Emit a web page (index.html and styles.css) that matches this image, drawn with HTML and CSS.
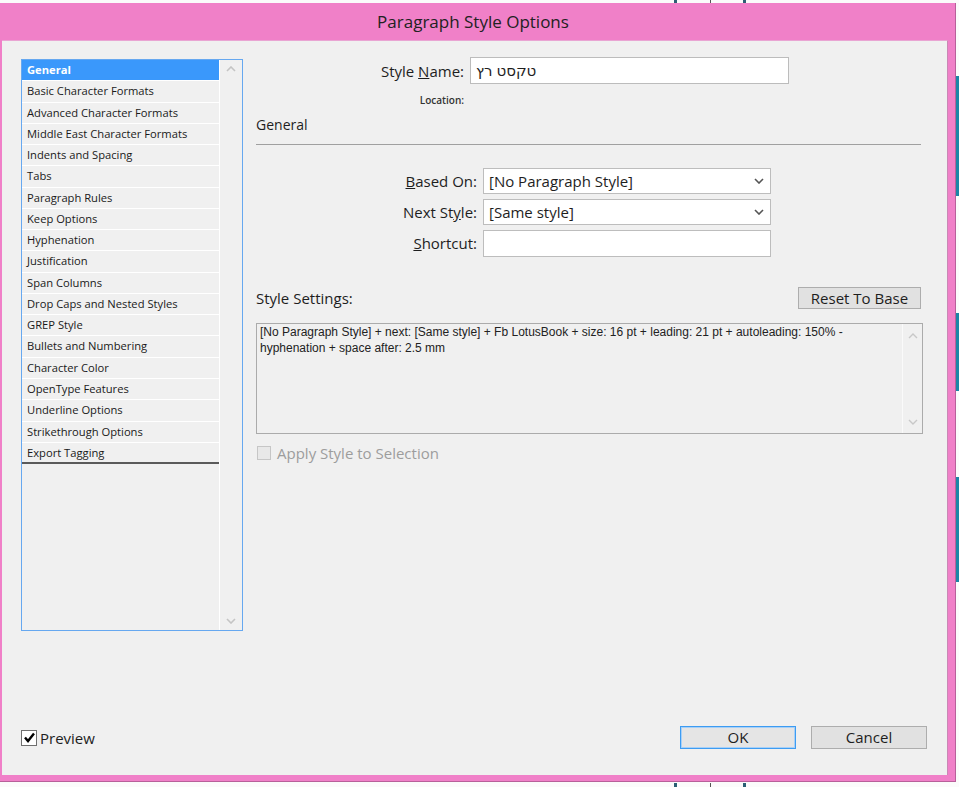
FILE: index.html
```html
<!DOCTYPE html>
<html>
<head>
<meta charset="utf-8">
<link rel="stylesheet" href="styles.css">
</head>
<body>
<div class="screen">
  <div class="bg-mark m1"></div>
  <div class="bg-mark m2"></div>
  <div class="bg-mark m3"></div>
  <div class="bg-mark m4"></div>
  <div class="bg-mark m5"></div>
  <div class="bg-mark m6"></div>
  <div class="teal t1"></div>
  <div class="teal t2"></div>
  <div class="teal t3"></div>

  <div class="dialog">
    <div class="titlebar">Paragraph Style Options</div>
    <div class="client">
      <div class="main">
        <div class="listbox">
          <ul class="list">
            <li class="sel">General</li>
            <li>Basic Character Formats</li>
            <li>Advanced Character Formats</li>
            <li>Middle East Character Formats</li>
            <li>Indents and Spacing</li>
            <li>Tabs</li>
            <li>Paragraph Rules</li>
            <li>Keep Options</li>
            <li>Hyphenation</li>
            <li>Justification</li>
            <li>Span Columns</li>
            <li>Drop Caps and Nested Styles</li>
            <li>GREP Style</li>
            <li>Bullets and Numbering</li>
            <li>Character Color</li>
            <li>OpenType Features</li>
            <li>Underline Options</li>
            <li>Strikethrough Options</li>
            <li class="last">Export Tagging</li>
          </ul>
          <div class="vscroll">
            <svg class="chev" width="10" height="6" viewBox="0 0 10 6"><polyline points="1,5 5,1 9,5" fill="none" stroke="#c4c4c4" stroke-width="1.6"/></svg>
            <svg class="chev" width="10" height="6" viewBox="0 0 10 6"><polyline points="1,1 5,5 9,1" fill="none" stroke="#c4c4c4" stroke-width="1.6"/></svg>
          </div>
        </div>

        <div class="panel">
          <div class="name-row">
            <span class="lbl name-lbl">Style <u>N</u>ame:</span>
            <div class="textbox name-box">טקסט רץ</div>
          </div>
          <div class="location"><span>Location:</span></div>
          <div class="heading">General</div>
          <div class="rule"></div>

          <div class="field-row first">
            <span class="lbl field-lbl"><u>B</u>ased On:</span>
            <div class="select">
              <span>[No Paragraph Style]</span>
              <svg width="10" height="6" viewBox="0 0 10 6"><polyline points="1,1 5,5 9,1" fill="none" stroke="#555" stroke-width="1.6"/></svg>
            </div>
          </div>
          <div class="field-row">
            <span class="lbl field-lbl">Next St<u>y</u>le:</span>
            <div class="select">
              <span>[Same style]</span>
              <svg width="10" height="6" viewBox="0 0 10 6"><polyline points="1,1 5,5 9,1" fill="none" stroke="#555" stroke-width="1.6"/></svg>
            </div>
          </div>
          <div class="field-row">
            <span class="lbl field-lbl"><u>S</u>hortcut:</span>
            <div class="select plain"></div>
          </div>

          <div class="settings-row">
            <span class="lbl">Style Settings:</span>
            <button class="btn reset">Reset To Base</button>
          </div>
          <div class="settings-box">
            <div class="settings-text">[No Paragraph Style] + next: [Same style] + Fb LotusBook + size: 16 pt + leading: 21 pt + autoleading: 150% - hyphenation + space after: 2.5 mm</div>
            <div class="settings-scroll">
              <svg width="10" height="6" viewBox="0 0 10 6"><polyline points="1,5 5,1 9,5" fill="none" stroke="#c8c8c8" stroke-width="1.4"/></svg>
              <svg width="10" height="6" viewBox="0 0 10 6"><polyline points="1,1 5,5 9,1" fill="none" stroke="#c8c8c8" stroke-width="1.4"/></svg>
            </div>
          </div>
          <div class="apply-row">
            <span class="cbox disabled"></span>
            <span class="apply-lbl">Apply Style to Selection</span>
          </div>
        </div>
      </div>

      <div class="footer">
        <div class="preview">
          <span class="cbox checked">
            <svg width="13" height="13" viewBox="0 0 13 13"><polyline points="2,6.5 5,10 11,2.5" fill="none" stroke="#000" stroke-width="2.4"/></svg>
          </span>
          <span class="preview-lbl">Preview</span>
        </div>
        <div class="buttons">
          <button class="btn ok">OK</button>
          <button class="btn cancel">Cancel</button>
        </div>
      </div>
    </div>
  </div>
</div>
</body>
</html>
```

FILE: styles.css
```css
* { box-sizing: border-box; }
html, body { margin: 0; padding: 0; background: #ffffff; }
.screen {
  position: relative;
  width: 959px;
  height: 787px;
  overflow: hidden;
  background: #fbfbfb;
  font-family: "Open Sans", "Noto Sans", sans-serif;
  color: #1e1e1e;
}
.bg-mark { position: absolute; width: 3px; height: 4px; background: #2b5f74; }
.m1 { left: 674px; top: 0; }
.m2 { left: 710px; top: 0; width: 1px; background: #555; }
.m3 { left: 743px; top: 0; }
.m4 { left: 674px; top: 783px; }
.m5 { left: 710px; top: 783px; width: 1px; background: #555; }
.m6 { left: 743px; top: 783px; }
.teal { position: absolute; left: 956px; width: 3px; background: #1b86a6; }
.t1 { top: 76px; height: 120px; }
.t2 { top: 313px; height: 78px; }
.t3 { top: 477px; height: 105px; }

.dialog {
  position: relative;
  margin-top: 3px;
  width: 956px;
  height: 779px;
  background: #f080c8;
  border-right: 1px solid #b8609a;
  border-bottom: 1px solid #b8609a;
  padding: 0 7px 6px 2px;
  display: flex;
  flex-direction: column;
}
.titlebar {
  height: 37px;
  line-height: 38px;
  text-align: center;
  font-size: 17px;
  color: #222;
  padding-right: 4px;
}
.client {
  flex: 1;
  background: #f0f0f0;
  border-right: 1px solid #c988b5;
  border-top: 1px solid #e9a5d3;
  padding: 18px 20px 26px 19px;
  display: flex;
  flex-direction: column;
}
.main { display: flex; align-items: flex-start; gap: 13px; }

/* left list */
.listbox {
  width: 222px;
  height: 572px;
  border: 1px solid #66a8f0;
  display: flex;
  background: #f0f0f0;
}
.list {
  list-style: none;
  margin: 0;
  padding: 0;
  width: 198px;
  border-right: 1px solid #ffffff;
  font-size: 11.2px;
}
.list li {
  height: 21.28px;
  line-height: 20px;
  padding-left: 5px;
  border-bottom: 1px solid #ffffff;
  color: #1a1a1a;
  white-space: nowrap;
}
.list li.sel { background: #3a98fb; color: #ffffff; font-weight: 700; }
.list li.last { border-bottom: 2px solid #5a5a5a; }
.vscroll {
  flex: 1;
  display: flex;
  flex-direction: column;
  justify-content: space-between;
  align-items: center;
  padding: 6px 0 6px 0;
}

/* right panel */
.panel { width: 667px; margin-top: -2px; }
.lbl { font-size: 15px; color: #1e1e1e; white-space: nowrap; }
.name-row { display: flex; align-items: center; height: 27px; }
.name-lbl { width: 208px; text-align: right; }
.textbox {
  margin-left: 6px;
  width: 319px;
  height: 27px;
  background: #fff;
  border: 1px solid #bcbcbc;
  font-size: 15px;
  line-height: 24px;
  padding-left: 5px;
  font-family: "Noto Sans", "DejaVu Sans", sans-serif;
}
.location {
  margin-top: 8px;
  width: 208px;
  text-align: right;
  font-size: 10px;
  line-height: 16px;
  font-weight: 600;
  color: #333;
}
.heading { margin-top: 7px; font-size: 14px; line-height: 20px; }
.rule { margin-top: 9px; width: 665px; border-top: 1px solid #a0a0a0; }

.field-row { display: flex; align-items: center; height: 26px; margin-top: 5px; }
.field-row.first { margin-top: 23px; }
.field-lbl { width: 221px; text-align: right; }
.select {
  margin-left: 6px;
  width: 288px;
  height: 26px;
  background: #fff;
  border: 1px solid #bdbdbd;
  display: flex;
  align-items: center;
  justify-content: space-between;
  padding: 0 6px 0 5px;
  font-size: 15px;
}
.select.plain { height: 27px; }

.settings-row {
  margin-top: 31px;
  width: 665px;
  display: flex;
  align-items: center;
  justify-content: space-between;
}
.btn {
  font-family: "Open Sans", "Noto Sans", sans-serif;
  font-size: 15px;
  color: #1e1e1e;
  background: #e1e1e1;
  border: 1px solid #adadad;
  padding: 0;
  margin: 0;
}
.reset { width: 123px; height: 22px; line-height: 18px; }
.settings-box {
  margin-top: 14px;
  width: 667px;
  height: 111px;
  border: 1px solid #ababab;
  display: flex;
}
.settings-text {
  flex: 1;
  padding: 0 3px;
  font-family: "Liberation Sans", sans-serif;
  font-size: 12px;
  line-height: 16px;
  color: #222;
}
.settings-scroll {
  width: 20px;
  border-left: 1px solid #fafafa;
  display: flex;
  flex-direction: column;
  justify-content: space-between;
  align-items: center;
  padding: 9px 0 8px 0;
}
.apply-row { margin-top: 9px; display: flex; align-items: center; gap: 6px; padding-left: 1px; }
.cbox { display: inline-block; width: 14px; height: 14px; }
.cbox.disabled { background: #e8e8e8; border: 1px solid #c6c6c6; }
.apply-lbl { font-size: 15px; color: #9d9d9d; }

.footer {
  margin-top: auto;
  display: flex;
  align-items: center;
  justify-content: space-between;
  height: 23px;
}
.preview { display: flex; align-items: center; gap: 3px; margin-left: 0; }
.cbox.checked {
  width: 16px;
  height: 16px;
  border: 1px solid #6f6f6f;
  background: #fff;
  display: flex;
  align-items: center;
  justify-content: center;
}
.preview-lbl { font-size: 15px; color: #1e1e1e; }
.buttons { display: flex; gap: 15px; }
.ok, .cancel { width: 116px; height: 23px; line-height: 19px; }
.ok { border-color: #3d9cf2; background: #e5e5e5; box-shadow: inset 0 0 0 1px #a8d0f7; }
```
